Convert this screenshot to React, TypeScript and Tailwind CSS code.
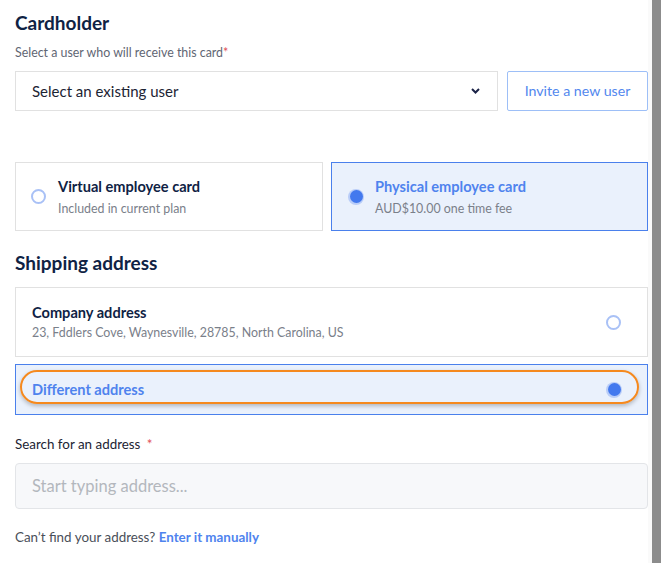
import { useState } from 'react'

type Option = { id: string; title: string; sub?: string }

const cardOptions: Option[] = [
  { id: 'virtual', title: 'Virtual employee card', sub: 'Included in current plan' },
  { id: 'physical', title: 'Physical employee card', sub: 'AUD$10.00 one time fee' },
]

function Radio({ checked }: { checked: boolean }) {
  if (checked) {
    return (
      <span className="flex h-[16px] w-[16px] shrink-0 items-center justify-center rounded-full bg-[#b9cdf8]">
        <span className="h-[13px] w-[13px] rounded-full bg-[#4379ee]" />
      </span>
    )
  }
  return <span className="h-[15px] w-[15px] shrink-0 rounded-full border-2 border-[#a9c1f6] bg-white" />
}

export default function App() {
  const [cardType, setCardType] = useState('physical')
  const [address, setAddress] = useState('different')

  return (
    <div className="flex h-[563px] w-[666px] overflow-hidden bg-white font-['Lato','Noto_Sans',sans-serif] text-[#1c2433]">
      <div className="w-[648px] shrink-0 pl-[15px]">
        <h2 className="pt-[11px] text-[19px] font-bold leading-[24px] text-[#0f2244]">Cardholder</h2>
        <p className="mt-[10px] text-[12.4px] leading-[16px] text-[#5f6673]">
          Select a user who will receive this card<span className="text-[#e2545b]">*</span>
        </p>

        <div className="mt-[10px] flex gap-[9px]">
          <button className="flex h-[40px] w-[483px] items-center justify-between border border-[#e1e1e1] pl-[16px] pr-[17px] text-left text-[15px] text-[#1c2433]">
            Select an existing user
            <svg width="9" height="6" viewBox="0 0 9 6" fill="none" stroke="#1b2347" strokeWidth="2" aria-hidden>
              <path d="M1 1l3.5 3.5L8 1" />
            </svg>
          </button>
          <button className="h-[40px] w-[141px] rounded-[2px] border border-[#9dbff7] text-[14.2px] text-[#5287ee]">
            Invite a new user
          </button>
        </div>

        <div className="mt-[51px] flex gap-[8px]">
          {cardOptions.map((o) => {
            const on = cardType === o.id
            return (
              <button
                key={o.id}
                onClick={() => setCardType(o.id)}
                className={
                  on
                    ? 'flex h-[69px] w-[317px] items-center gap-[11px] border border-[#4a80ec] bg-[#eaf1fc] pl-[16px] text-left'
                    : 'flex h-[69px] w-[308px] items-center gap-[12px] border border-[#e1e1e1] bg-white pl-[15px] text-left'
                }
              >
                <Radio checked={on} />
                <span className="flex flex-col">
                  <span className={`text-[14.6px] font-bold leading-[20px] ${on ? 'text-[#4f83ee]' : 'text-[#0f2244]'}`}>
                    {o.title}
                  </span>
                  <span className="mt-[4px] text-[12.4px] leading-[16px] text-[#7a808a]">{o.sub}</span>
                </span>
              </button>
            )
          })}
        </div>

        <h2 className="mt-[20px] text-[19px] font-bold leading-[24px] text-[#0f2244]">Shipping address</h2>

        <button
          onClick={() => setAddress('company')}
          className="mt-[12px] flex h-[70px] w-[633px] items-center justify-between border border-[#e1e1e1] pl-[16px] pr-[26px] text-left"
        >
          <span className="flex flex-col">
            <span className="text-[14.6px] font-bold leading-[20px] text-[#0f2244]">Company address</span>
            <span className="mt-[2px] text-[12.4px] leading-[16px] text-[#7a808a]">
              23, Fddlers Cove, Waynesville, 28785, North Carolina, US
            </span>
          </span>
          <Radio checked={address === 'company'} />
        </button>

        <div className="relative mt-[7px]">
          <button
            onClick={() => setAddress('different')}
            className="flex h-[51px] w-[633px] items-center justify-between border border-[#4a80ec] bg-[#eaf1fc] pl-[16px] pr-[25px] text-left"
          >
            <span className="text-[14.6px] font-bold leading-[20px] text-[#4f83ee]">Different address</span>
            <Radio checked={address === 'different'} />
          </button>
          {/* highlight ring around the selected row */}
          <div className="pointer-events-none absolute left-[5px] top-[6px] h-[34px] w-[619px] rounded-full border-2 border-[#f5891e] shadow-[0_2px_4px_rgba(0,0,0,0.25)]" />
        </div>

        <p className="mt-[20px] text-[13.4px] leading-[18px] text-[#1c2433]">
          Search for an address <span className="ml-[3px] text-[#e2545b]">*</span>
        </p>
        <input
          placeholder="Start typing address..."
          className="mt-[10px] h-[46px] w-[633px] rounded-[4px] border border-[#e3e5e8] bg-[#f7f8fa] px-[16px] text-[16.5px] text-[#1c2433] outline-none placeholder:text-[#b3b7bd]"
        />

        <p className="mt-[19px] text-[13.4px] leading-[18px] text-[#4a4f59]">
          Can’t find your address?{' '}
          <a className="cursor-pointer font-bold text-[#4f83ee]">Enter it manually</a>
        </p>
      </div>
      <div className="w-[4px] shrink-0 bg-[#fafafa]" />
      <div className="w-[9px] shrink-0 bg-[#8c8c8c]" />
      <div className="flex-1 bg-white" />
    </div>
  )
}
